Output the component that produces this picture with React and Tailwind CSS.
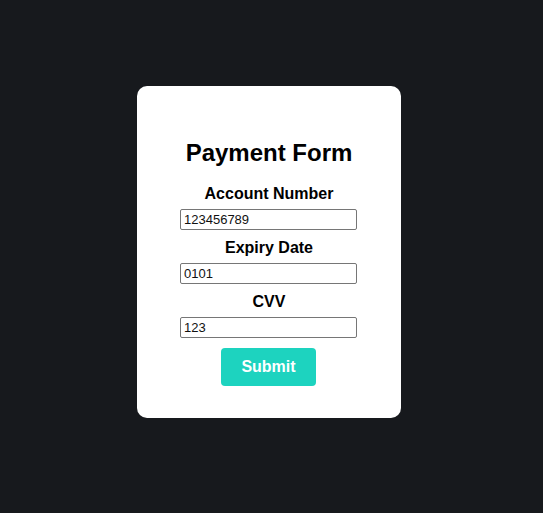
export default function App() {
  return (
    <div
      className="min-h-[513px] w-full bg-[#17191d] pl-[137px] pt-[86px]"
      style={{ fontFamily: '"Liberation Sans", Arial, sans-serif' }}
    >
      <form
        className="flex w-[264px] flex-col items-center rounded-[10px] bg-white pb-[32px] pt-[53px]"
        onSubmit={(e) => e.preventDefault()}
      >
        <h2 className="h-[28px] text-[24px] font-bold leading-[28px] text-black">Payment Form</h2>

        <label className="mt-[18px] h-[18px] text-[16px] font-bold leading-[18px] text-black">
          Account Number
        </label>
        <input
          className="mr-[1px] mt-[6px] h-[21px] w-[177px] rounded-[2px] border border-[#767676] px-[3px] text-[13px] text-[#111] outline-none"
          defaultValue="123456789"
        />

        <label className="mt-[9px] h-[18px] text-[16px] font-bold leading-[18px] text-black">
          Expiry Date
        </label>
        <input
          className="mr-[1px] mt-[6px] h-[21px] w-[177px] rounded-[2px] border border-[#767676] px-[3px] text-[13px] text-[#111] outline-none"
          defaultValue="0101"
        />

        <label className="mt-[9px] h-[18px] text-[16px] font-bold leading-[18px] text-black">CVV</label>
        <input
          className="mr-[1px] mt-[6px] h-[21px] w-[177px] rounded-[2px] border border-[#767676] px-[3px] text-[13px] text-[#111] outline-none"
          defaultValue="123"
        />

        <button
          type="submit"
          className="mr-[1px] mt-[10px] h-[38px] w-[95px] rounded-[4px] bg-[#1dd3bf] text-[16px] font-bold text-white"
        >
          Submit
        </button>
      </form>
    </div>
  );
}
